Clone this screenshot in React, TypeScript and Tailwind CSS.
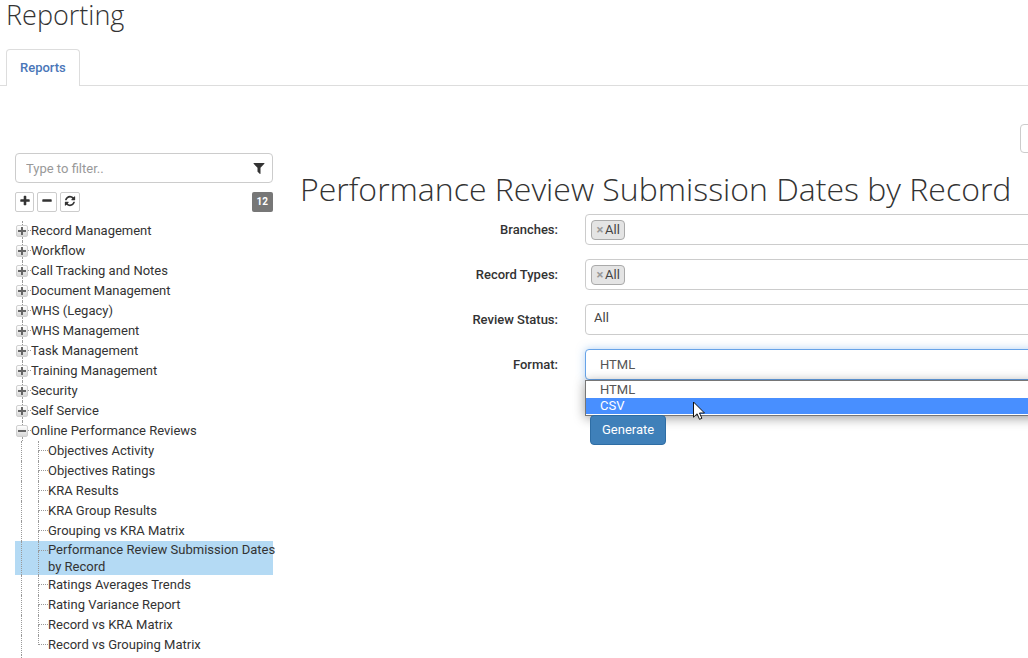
import React from 'react';

const ICONS = {
  filter:
    'M1595 295q17 41-14 70l-493 493v742q0 42-39 59-13 5-25 5-27 0-45-19l-256-256q-19-19-19-45v-486l-493-493q-31-29-14-70 17-39 59-39h1280q42 0 59 39z',
  plus: 'M1600 736v192q0 40-28 68t-68 28h-416v416q0 40-28 68t-68 28h-192q-40 0-68-28t-28-68v-416h-416q-40 0-68-28t-28-68v-192q0-40 28-68t68-28h416v-416q0-40 28-68t68-28h192q40 0 68 28t28 68v416h416q40 0 68 28t28 68z',
  minus:
    'M1600 736v192q0 40-28 68t-68 28h-1216q-40 0-68-28t-28-68v-192q0-40 28-68t68-28h1216q40 0 68 28t28 68z',
  refresh:
    'M1639 1056q0 5-1 7-64 268-268 434.5t-478 166.5q-146 0-282.5-55t-243.5-157l-129 129q-19 19-45 19t-45-19-19-45v-448q0-26 19-45t45-19h448q26 0 45 19t19 45-19 45l-137 137q71 66 161 102t187 36q134 0 250-65t186-179q11-17 53-117 8-23 30-23h192q13 0 22.5 9.5t9.5 22.5zm25-800v448q0 26-19 45t-45 19h-448q-26 0-45-19t-19-45 19-45l138-138q-148-137-349-137-134 0-250 65t-186 179q-11 17-53 117-8 23-30 23h-199q-13 0-22.5-9.5t-9.5-22.5v-7q65-268 270-434.5t480-166.5q146 0 284 55.5t245 156.5l130-129q19-19 45-19t45 19 19 45z',
};

function Icon({ name, className }: { name: keyof typeof ICONS; className: string }) {
  return (
    <svg viewBox="0 0 1792 1792" fill="currentColor" aria-hidden="true" className={className}>
      <path d={ICONS[name]} />
    </svg>
  );
}

const folders = [
  'Record Management',
  'Workflow',
  'Call Tracking and Notes',
  'Document Management',
  'WHS (Legacy)',
  'WHS Management',
  'Task Management',
  'Training Management',
  'Security',
  'Self Service',
];

const reviewReports = [
  'Objectives Activity',
  'Objectives Ratings',
  'KRA Results',
  'KRA Group Results',
  'Grouping vs KRA Matrix',
  'Performance Review Submission Dates by Record',
  'Ratings Averages Trends',
  'Rating Variance Report',
  'Record vs KRA Matrix',
  'Record vs Grouping Matrix',
];

const SELECTED = 'Performance Review Submission Dates by Record';

function FolderRow({ label, open = false }: { label: string; open?: boolean }) {
  return (
    <div className="flex h-5">
      <div className="ml-px flex h-full w-3 flex-col items-center">
        <span className="flex-1 border-l border-dotted border-[#999]" />
        <button
          type="button"
          aria-label={`${open ? 'Collapse' : 'Expand'} ${label}`}
          aria-expanded={open}
          className="flex size-3 items-center justify-center rounded-xs border border-[#d0d0d0] bg-linear-to-b from-white to-[#d8d8d8] text-[#666]"
        >
          <svg viewBox="0 0 8 8" className="size-2" stroke="currentColor" strokeWidth="2" aria-hidden="true">
            <path d={open ? 'M0 4H8' : 'M0 4H8M4 0V8'} />
          </svg>
        </button>
        <span className="flex-1 border-l border-dotted border-[#999]" />
      </div>
      <span className="h-[10px] w-[3px] border-b border-dotted border-[#999]" />
      <span className="leading-5">{label}</span>
    </div>
  );
}

function LeafRow({ label, last }: { label: string; last: boolean }) {
  const selected = label === SELECTED;
  return (
    <li role="treeitem" aria-selected={selected} className={selected ? 'flex bg-[#b4daf4]' : 'flex'}>
      <span className="ml-1.5 w-[17px] border-l border-dotted border-[#999]" />
      <span className="flex w-[10px] flex-col">
        <span className="h-[10px] border-b border-l border-dotted border-[#999]" />
        {!last && <span className="flex-1 border-l border-dotted border-[#999]" />}
      </span>
      <a href="#report" className={selected ? '-mr-1 flex-1 leading-[17px]' : 'flex-1 leading-5'}>
        {label}
      </a>
    </li>
  );
}

function Field({ label, id, children }: { label: string; id: string; children: React.ReactNode }) {
  return (
    <div className="flex">
      <label htmlFor={id} className="w-[258px] shrink-0 text-right leading-[31px] font-medium">
        {label}
      </label>
      <div className="relative ml-[27px] h-[31px] flex-1">{children}</div>
    </div>
  );
}

function TagBox({ id }: { id: string }) {
  return (
    <div id={id} className="flex h-full items-center rounded border border-[#ccc] px-[5px]">
      <span className="flex h-5 items-center rounded border border-[#aaa] bg-[#e4e4e4] px-1 text-[#444]">
        <button type="button" aria-label="Remove All" className="w-2 font-bold text-[#999]">
          ×
        </button>
        <span className="pl-px">All</span>
      </span>
    </div>
  );
}

export default function App() {
  return (
    <div className="overflow-x-clip bg-white font-[Roboto,sans-serif] text-[13px] text-[#333]">
      <h1 className="pl-1.5 font-['Open_Sans',sans-serif] text-[27px] leading-[30px] font-light">Reporting</h1>

      <nav className="mt-[19px] flex border-b border-[#ddd] pl-1.5">
        <a
          href="#reports"
          className="-mb-px rounded-t border border-b-0 border-[#ddd] bg-white px-[13px] py-2 leading-5 font-medium text-[#4a76b8]"
        >
          Reports
        </a>
      </nav>

      <main className="flex pt-[38px] pl-[15px]">
        <aside className="mt-[29px] w-[258px] shrink-0">
          <div className="flex h-[30px] items-center rounded-sm border border-[#ccc] px-[10px]">
            <input
              type="text"
              aria-label="Filter reports"
              placeholder="Type to filter.."
              className="min-w-0 flex-1 pt-[2px] outline-none placeholder:text-[#999]"
            />
            <Icon name="filter" className="-mr-1 size-[14px]" />
          </div>

          <div className="mt-[9px] flex items-center gap-[3px]">
            <button type="button" aria-label="Expand all" className="flex h-5 w-[19px] justify-center rounded-xs border border-[#ccc] pt-[2px]">
              <Icon name="plus" className="size-3" />
            </button>
            <button type="button" aria-label="Collapse all" className="flex h-5 w-5 justify-center rounded-xs border border-[#ccc] pt-[2px]">
              <Icon name="minus" className="size-3" />
            </button>
            <button type="button" aria-label="Refresh" className="flex h-5 w-5 justify-center rounded-xs border border-[#ccc] pt-[2px]">
              <Icon name="refresh" className="size-3" />
            </button>
            <span className="ml-auto h-5 rounded-xs bg-[#777] px-[5px] text-[10px] leading-5 font-bold text-white">12</span>
          </div>

          <ul role="tree" className="mt-[9px]">
            {folders.map((label) => (
              <li key={label} role="treeitem">
                <FolderRow label={label} />
              </li>
            ))}
            <li role="treeitem">
              <FolderRow label="Online Performance Reviews" open />
              <ul role="group">
                {reviewReports.map((label, i) => (
                  <LeafRow key={label} label={label} last={i === reviewReports.length - 1} />
                ))}
              </ul>
              <div className="ml-1.5 h-[3px] border-l border-dotted border-[#999]" />
            </li>
          </ul>
        </aside>

        <section className="-mr-5 ml-[27px] min-w-0 flex-1">
          <div className="flex justify-end">
            <button type="button" aria-label="Options" className="h-[29px] w-7 rounded-sm border border-[#ccc]" />
          </div>
          <h2 className="mt-[14px] font-['Open_Sans',sans-serif] text-[32px] leading-[44px] font-light whitespace-nowrap">
            Performance Review Submission Dates by Record
          </h2>

          <form className="mt-[3px] flex flex-col gap-[14px]">
            <Field label="Branches:" id="branches">
              <TagBox id="branches" />
            </Field>
            <Field label="Record Types:" id="record-types">
              <TagBox id="record-types" />
            </Field>
            <Field label="Review Status:" id="review-status">
              <select
                id="review-status"
                className="block h-full w-full appearance-none rounded border border-[#ccc] bg-white px-2 pb-1 text-[#444]"
              >
                <option>All</option>
              </select>
            </Field>
            <Field label="Format:" id="format">
              <select
                id="format"
                className="block h-full w-full appearance-none rounded border border-[#66a3e8] bg-white px-[14px] text-[#555] shadow-[0_0_8px_rgba(102,163,232,0.5)] outline-none"
              >
                <option>HTML</option>
                <option>CSV</option>
              </select>
              <ul
                role="listbox"
                aria-label="Format options"
                className="absolute inset-x-0 top-full z-10 border border-[#767676] bg-white pb-px text-[#555] shadow-[0_2px_12px_rgba(0,0,0,0.4)]"
              >
                <li role="option" aria-selected="false" className="px-[14px] leading-[17px]">
                  HTML
                </li>
                <li role="option" aria-selected="true" className="bg-[#488fff] px-[14px] leading-4 text-white">
                  CSV
                </li>
              </ul>
              <svg
                viewBox="0 0 12 19"
                aria-hidden="true"
                className="absolute top-[52px] left-[108px] z-20 h-[19px] w-3"
                fill="#fff"
                stroke="#111"
                strokeWidth="1"
              >
                <path d="M.5 1v15.2l3.6-3.4 2.4 5.5 2.4-1-2.4-5.3h5z" />
              </svg>
            </Field>
            <div className="mt-[21px] pl-[290px]">
              <button
                type="button"
                className="relative z-10 h-[30px] rounded border border-[#2e6da4] bg-[#3f80b9] px-[11px] text-white"
              >
                Generate
              </button>
            </div>
          </form>
        </section>
      </main>
    </div>
  );
}
